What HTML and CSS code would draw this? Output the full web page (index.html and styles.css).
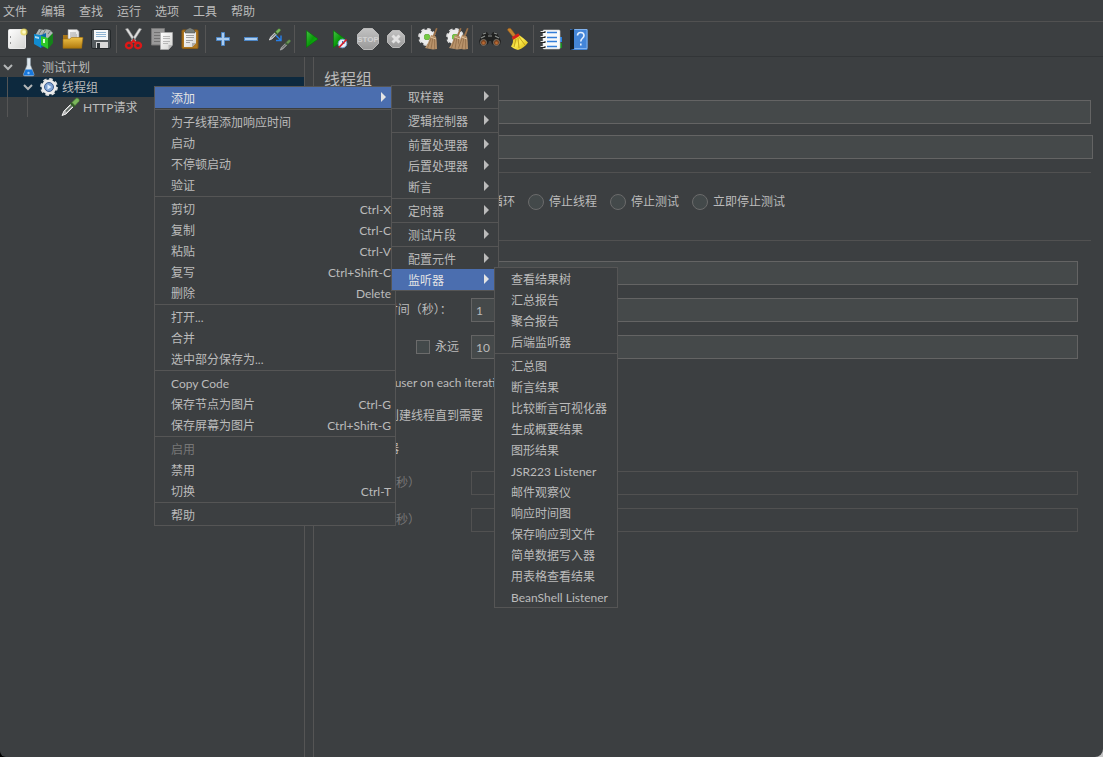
FILE: index.html
```html
<!DOCTYPE html>
<html lang="zh-CN">
<head>
<meta charset="utf-8">
<title>线程组</title>
<link rel="stylesheet" href="styles.css">
</head>
<body>
<svg class="defs" aria-hidden="true">
  <defs>
    <linearGradient id="paper" x1="0" y1="0" x2="1" y2="1"><stop offset="0" stop-color="#fff"/><stop offset="1" stop-color="#d4d4d2"/></linearGradient>
    <linearGradient id="gold" x1="0" y1="0" x2="0" y2="1"><stop offset="0" stop-color="#efc248"/><stop offset="1" stop-color="#b17a0e"/></linearGradient>
    <linearGradient id="play" x1="0" y1="0" x2="1" y2="1"><stop offset="0" stop-color="#44c244"/><stop offset=".5" stop-color="#0a9a0a"/><stop offset="1" stop-color="#0cc81c"/></linearGradient>
    <linearGradient id="grey" x1="0" y1="0" x2="0" y2="1"><stop offset="0" stop-color="#c2c2c2"/><stop offset="1" stop-color="#999"/></linearGradient>
    <linearGradient id="yellow" x1="0" y1="0" x2="1" y2="1"><stop offset="0" stop-color="#c9a80c"/><stop offset=".5" stop-color="#fbe94b"/><stop offset="1" stop-color="#d0ad08"/></linearGradient>
    <symbol id="gear" viewBox="0 0 18 18">
      <circle cx="9" cy="9" r="7.600" fill="none" stroke="#dcdcdc" stroke-width="2.600" stroke-dasharray="3.400 2.570"/>
      <circle cx="9" cy="9" r="5.200" fill="none" stroke="#ececec" stroke-width="4.600"/>
    </symbol>
    <symbol id="broom" viewBox="0 0 14 22">
      <path d="M12 0l1.500.6-3.300 9-2-.6z" fill="#9c7148"/>
      <path d="M7 7l5 1.600c1 4.400.7 8.400 1 12.400L9 21.500 1 20C4 16 5 12 7 7z" fill="#b8926a"/>
      <path d="M7.500 9L3.500 20M9 9L7 21M10.500 9.500l.2 11.500" stroke="#8a6642" stroke-width=".7" fill="none"/>
      <path d="M6.500 9l5.500 2" stroke="#e5c69f"/>
    </symbol>
    <symbol id="picker" viewBox="0 0 20 20">
      <path d="M2 18.500l2-4.500L11.500 6.500l2.500 2.500-8 8z" fill="#b9b9b9" stroke="#efefef"/>
      <path d="M6 14.500l6-6" stroke="#56615b" stroke-width="1.400"/>
      <path d="M10.500 6l4 4" stroke="#315f24" stroke-width="2"/>
      <path d="M12 5.500l4-4c1.500-1.200 4 .8 3 2.700L15 8.500z" fill="#7bb75b" stroke="#4f8f35" stroke-width=".6"/>
    </symbol>
  </defs>
</svg>

<nav class="menubar" aria-label="主菜单">
  <button>文件</button><button>编辑</button><button>查找</button><button>运行</button><button>选项</button><button>工具</button><button>帮助</button>
</nav>

<div class="toolbar" role="toolbar">
  <div class="tools">
    <button aria-label="新建"><svg viewBox="0 0 28 28"><rect x="5.500" y="4.500" width="17" height="19" rx="1" fill="url(#paper)" stroke="#e9e9e9"/><path d="M7.500 11v2M7.500 17v2" stroke="#999"/><circle cx="21" cy="7" r="3.600" fill="#e8d755" opacity=".75"/><circle cx="21" cy="7" r="1.800" fill="#fffbc4"/></svg></button>
    <button aria-label="模板"><svg viewBox="0 0 28 28"><path d="M5 9l3-5 5 1 1-1 5 1 3 3-2 7H5z" fill="#aeb5b5"/><path d="M8 9l3-5M12 9l3-5M17 9l3-4" stroke="#6e7777"/><path d="M3 9l7 1v13l-7-4z" fill="#118bd0"/><path d="M10 10l5-2v12l-5 3z" fill="#0a68aa"/><path d="M4 11l4 1v2l-4-1z" fill="#aadcf5"/><path d="M10 11l7 2v11l-7-4z" fill="#2ec829"/><path d="M17 13l5-5v10l-5 6z" fill="#15821a"/><rect x="12" y="14" width="2" height="4" fill="#d7ffd1"/></svg></button>
    <button aria-label="打开"><svg viewBox="0 0 28 28"><path d="M4 10h5l1 2h13v11H4z" fill="#a97516"/><path d="M9 4.500h9l2 2V17H9z" fill="url(#paper)" stroke="#999" stroke-width=".6"/><path d="M11 8h6M11 10h7M11 12h7" stroke="#888" stroke-width=".7"/><path d="M4 14h7l1.500-1.500H24l-1.500 10.800H4z" fill="url(#gold)" stroke="#a06d0d" stroke-width=".6"/></svg></button>
    <button aria-label="保存"><svg viewBox="0 0 28 28"><rect x="4.500" y="4.500" width="19" height="19" rx="1.500" fill="#555b5e" stroke="#25292b"/><rect x="7" y="5" width="14" height="10" fill="#f5f8fa"/><path d="M9 7.500h10M9 9.500h10M9 11.500h10" stroke="#8eb4d2"/><rect x="9" y="17" width="12" height="6" fill="#dadada"/><rect x="10" y="18" width="3" height="5" fill="#30373a"/></svg></button>
  </div>
  <div class="tools">
    <button aria-label="剪切"><svg viewBox="0 0 28 28"><path d="M5.500 4l2.500-.5L16 16l-1.500 2zM21.500 4L19 3.500 11 16l1.500 2z" fill="#dfdfdf" stroke="#9b9b9b" stroke-width=".6"/><ellipse cx="9" cy="20.500" rx="3" ry="2.800" fill="none" stroke="#dc1717" stroke-width="2.400"/><ellipse cx="18" cy="20.500" rx="3" ry="2.800" fill="none" stroke="#dc1717" stroke-width="2.400"/><path d="M10.500 18.500l3-3 3 3" stroke="#dc1717" stroke-width="2" fill="none"/></svg></button>
    <button aria-label="复制"><svg viewBox="0 0 28 28"><path d="M3.500 3.500h13V20h-13z" fill="#999" stroke="#777"/><path d="M6 7.500h8M6 10.500h7M6 13.500h6M6 16.500h6" stroke="#727272"/><path d="M12.500 7.500h12V20l-4 4.500h-8z" fill="url(#paper)" stroke="#aaa" stroke-width=".7"/><path d="M15 11.500h7M15 13.500h7M15 16.500h7M15 18.500h5" stroke="#aaa" stroke-width=".8"/><path d="M20.500 24.500v-4.500h4z" fill="#b9b9b9"/></svg></button>
    <button aria-label="粘贴"><svg viewBox="0 0 28 28"><rect x="6" y="5" width="16" height="18.500" rx="1" fill="#ae7720" stroke="#8d5d14"/><path d="M8 7h12v11l-4 4H8z" fill="url(#paper)"/><path d="M16 22v-4h4z" fill="#aaa"/><path d="M9 6l2-2h1l1-1h2l1 1h1l2 2v2H9z" fill="#777d78" stroke="#444" stroke-width=".5"/><path d="M10 10.500h8M10 12.500h8M10 15.500h7M10 17.500h4" stroke="#a1a1a1"/></svg></button>
  </div>
  <div class="tools">
    <button aria-label="展开全部"><svg viewBox="0 0 28 28"><path d="M12.500 7.500h3v5h5v3h-5v5h-3v-5h-5v-3h5z" fill="#aaccef" stroke="#4d86c5"/></svg></button>
    <button aria-label="折叠全部"><svg viewBox="0 0 28 28"><rect x="7.500" y="12.500" width="13" height="3" fill="#aaccef" stroke="#4d86c5"/></svg></button>
    <button aria-label="切换"><svg viewBox="0 0 28 28"><use href="#picker" x="3" y="3" width="13" height="13"/><use href="#picker" x="14" y="14" width="12" height="12" opacity=".7"/><path d="M11 10.500l4.500 4.500M16 10.500v5h-5" fill="none" stroke="#2880e8" stroke-width="1.400"/></svg></button>
  </div>
  <div class="tools">
    <button aria-label="启动"><svg viewBox="0 0 28 28"><path d="M8.500 5.500v17L20 14z" fill="url(#play)" stroke="#08720a" stroke-width=".7"/></svg></button>
    <button aria-label="不停顿启动"><svg viewBox="0 0 28 28"><path d="M7.500 5.500v17L19 14z" fill="url(#play)" stroke="#08720a" stroke-width=".7"/><circle cx="16.500" cy="18.500" r="4.300" fill="#e5eff9" stroke="#79a5d3"/><path d="M16.500 16v2.500h2" stroke="#3778b7" fill="none"/><path d="M13 22.500l7.500-8" stroke="#d3202b" stroke-width="1.800"/></svg></button>
    <button aria-label="停止"><svg viewBox="0 0 28 28"><path d="M9.500 3.500h9l6 6v9l-6 6h-9l-6-6v-9z" fill="url(#grey)" stroke="#b9b9b9"/><text x="14" y="17" class="stop-text" text-anchor="middle">STOP</text></svg></button>
    <button aria-label="关闭"><svg viewBox="0 0 28 28"><path d="M10.500 5.500h7l5 5v7l-5 5h-7l-5-5v-7z" fill="url(#grey)" stroke="#bababa"/><path d="M10.500 10.500l7 7M17.500 10.500l-7 7" stroke="#e2e2e2" stroke-width="3"/></svg></button>
  </div>
  <div class="tools">
    <button aria-label="清除"><svg viewBox="0 0 28 28"><use href="#gear" x="3" y="3" width="18" height="18"/><circle cx="12" cy="12" r="3" fill="#75c943"/><use href="#broom" x="9" y="3" width="14" height="22"/></svg></button>
    <button aria-label="清除全部"><svg viewBox="0 0 28 28"><use href="#gear" x="3" y="3" width="18" height="18"/><circle cx="12" cy="12" r="3" fill="#75c943"/><use href="#broom" x="5" y="3" width="14" height="22"/><use href="#broom" x="12" y="3" width="14" height="22"/></svg></button>
  </div>
  <div class="tools">
    <button aria-label="查找"><svg viewBox="0 0 28 28"><path d="M7 8l4-1 2 3h2l2-3 4 1 4 8-1 4-4 1-4-2-1-3h-2l-1 3-4 2-4-1-1-4z" fill="#202120"/><path d="M7 9l3-1M18 8l3 1M12 11h4M5 13l4-2M23 13l-4-2" stroke="#8c908d" stroke-width="1.200"/><circle cx="7.500" cy="17.500" r="3" fill="#7a421e" stroke="#77736b"/><circle cx="20.500" cy="17.500" r="3" fill="#7a421e" stroke="#77736b"/><circle cx="7.500" cy="18" r="1.400" fill="#b96a34"/><circle cx="20.500" cy="18" r="1.400" fill="#b96a34"/></svg></button>
    <button aria-label="重置查找"><svg viewBox="0 0 28 28"><path d="M3.500 5c0-2 3-2.500 4-.5l4.500 6-2.500 2z" fill="#c48330" stroke="#8c541c" stroke-width=".6"/><path d="M8.500 12.500L14 9c4 3 7 5.500 10 8.500-2.500 3.500-5.500 6-10 7.500-3.500-1-5-2-7-3.500 2-3 2.500-5.500 1.500-9z" fill="url(#yellow)"/><path d="M12 14l-2 8M14 13l1 10M15 12l6 8" stroke="#b79613" stroke-width=".8"/><path d="M8.500 13.500l6.500-4" stroke="#d5201c" stroke-width="3"/></svg></button>
  </div>
  <div class="tools">
    <button aria-label="函数助手"><svg viewBox="0 0 28 28"><path d="M22 12h3v5h-3z" fill="#2882e6"/><path d="M22 18h3v5h-3z" fill="#198c20"/><rect x="6" y="5" width="17" height="19" rx="1" fill="#f8fafb" stroke="#ccc" stroke-width=".6"/><path d="M10 7.500h10M10 12.500h10M10 16.500h10M10 21.500h10" stroke="#347ed8" stroke-width="1.300"/><path d="M3.500 7h5M3.500 12h5M3.500 17h5M3.500 22h5" stroke="#222" stroke-width="2"/><path d="M3.500 6.500h4M3.500 11.500h4M3.500 16.500h4M3.500 21.500h4" stroke="#ddd"/></svg></button>
    <button aria-label="帮助"><svg viewBox="0 0 28 28"><rect x="5" y="4" width="17.500" height="21" rx="1" fill="#4385d8"/><path d="M5 5l4-1v20l-4 1z" fill="#151d25"/><path d="M9.500 4.500h12.500v19H9.500" fill="none" stroke="#81b2ed"/><path d="M12.500 10.500c0-4 6.500-4 6.500 0 0 3-3.200 2.500-3.200 6M15.800 18.500v2" stroke="#e4f0ff" stroke-width="1.600" fill="none"/></svg></button>
  </div>
</div>

<main class="workspace">
  <aside class="tree-panel">
    <ul class="tree">
      <li class="node"><svg class="chevron" viewBox="0 0 10 10"><path d="M1 3l4 4 4-4"/></svg><svg class="node-icon" viewBox="0 0 20 20"><path d="M8 1h3.500v7l3.500 9c.4 1.200-.2 2-1.500 2H6c-1.300 0-1.900-.8-1.500-2L8 8z" fill="#dfe8ee" stroke="#8b99a2" stroke-width=".6"/><path d="M6.500 12.500h6.500l2 5c0 .8-.3 1-1.500 1H6c-1.200 0-1.500-.2-1.500-1z" fill="#1877db"/><circle cx="9.500" cy="16" r="1.200" fill="#8cc4ff"/></svg><span>测试计划</span></li>
      <li class="node level-1 selected"><svg class="chevron" viewBox="0 0 10 10"><path d="M1 3l4 4 4-4"/></svg><svg class="node-icon" viewBox="0 0 20 20"><use href="#gear" x="1" y="1" width="18" height="18"/><circle cx="10" cy="10" r="4.500" fill="#7ea2d2" stroke="#3d5c8e"/><path d="M8.500 7.500v5l4-2.500z" fill="#e3efff"/></svg><span>线程组</span></li>
      <li class="node level-2"><svg class="node-icon" viewBox="0 0 20 20"><use href="#picker" width="20" height="20"/></svg><span>HTTP请求</span></li>
    </ul>
  </aside>

  <form class="editor">
    <h1>线程组</h1>
    <div class="row wide"><label for="name">名称：</label><input id="name" type="text"></div>
    <div class="row wide comment"><label for="comment">注释：</label><input id="comment" type="text"></div>
    <h2>在取样器错误后要执行的动作</h2>
    <div class="radios">
      <label><input type="radio" name="on-error">继续</label>
      <label><input type="radio" name="on-error">启动下一进程循环</label>
      <label><input type="radio" name="on-error">停止线程</label>
      <label><input type="radio" name="on-error">停止测试</label>
      <label><input type="radio" name="on-error">立即停止测试</label>
    </div>
    <h2 class="second">线程属性</h2>
    <div class="props">
      <div class="row"><label for="threads">线程数：</label><input id="threads" type="text"></div>
      <div class="row"><label for="ramp">Ramp-Up时间（秒）：</label><input id="ramp" type="text" value="1"></div>
      <div class="row"><span class="loop"><label for="loops">循环次数</label><label class="check"><input type="checkbox">永远</label></span><input id="loops" type="text" value="10"></div>
      <label class="check"><input type="checkbox">Same user on each iteration</label>
      <label class="check"><input type="checkbox">延迟创建线程直到需要</label>
      <label class="check"><input type="checkbox">调度器</label>
      <div class="row"><label class="off" for="duration">持续时间（秒）</label><input id="duration" type="text" disabled></div>
      <div class="row"><label class="off" for="delay">启动延迟（秒）</label><input id="delay" type="text" disabled></div>
    </div>
  </form>
</main>

<div class="menu context-menu" role="menu">
  <button class="active arrow">添加</button>
  <hr>
  <button>为子线程添加响应时间</button>
  <button>启动</button>
  <button>不停顿启动</button>
  <button>验证</button>
  <hr>
  <button>剪切<kbd>Ctrl-X</kbd></button>
  <button>复制<kbd>Ctrl-C</kbd></button>
  <button>粘贴<kbd>Ctrl-V</kbd></button>
  <button>复写<kbd>Ctrl+Shift-C</kbd></button>
  <button>删除<kbd>Delete</kbd></button>
  <hr>
  <button>打开...</button>
  <button>合并</button>
  <button>选中部分保存为...</button>
  <hr>
  <button>Copy Code</button>
  <button>保存节点为图片<kbd>Ctrl-G</kbd></button>
  <button>保存屏幕为图片<kbd>Ctrl+Shift-G</kbd></button>
  <hr>
  <button disabled>启用</button>
  <button>禁用</button>
  <button>切换<kbd>Ctrl-T</kbd></button>
  <hr>
  <button>帮助</button>
</div>

<div class="menu add-menu" role="menu">
  <button class="arrow">取样器</button>
  <hr>
  <button class="arrow">逻辑控制器</button>
  <hr>
  <button class="arrow">前置处理器</button>
  <button class="arrow">后置处理器</button>
  <button class="arrow">断言</button>
  <hr>
  <button class="arrow">定时器</button>
  <hr>
  <button class="arrow">测试片段</button>
  <hr>
  <button class="arrow">配置元件</button>
  <button class="arrow active">监听器</button>
</div>

<div class="menu listener-menu" role="menu">
  <button>查看结果树</button>
  <button>汇总报告</button>
  <button>聚合报告</button>
  <button>后端监听器</button>
  <hr>
  <button>汇总图</button>
  <button>断言结果</button>
  <button>比较断言可视化器</button>
  <button>生成概要结果</button>
  <button>图形结果</button>
  <button>JSR223 Listener</button>
  <button>邮件观察仪</button>
  <button>响应时间图</button>
  <button>保存响应到文件</button>
  <button>简单数据写入器</button>
  <button>用表格查看结果</button>
  <button>BeanShell Listener</button>
</div>
</body>
</html>
```

FILE: styles.css
```css
* { box-sizing: border-box; }

html { background: linear-gradient(90deg, #000 50%, #c4c4c4 50%); }

body {
  margin: 0;
  min-height: 100vh;
  display: flex;
  flex-direction: column;
  background: #3c3f41;
  color: #bbb;
  border-radius: 0 0 8px 6px;
  font: 12px/18px Lato, "Noto Sans CJK SC", sans-serif;
}

button, input, kbd { font: inherit; color: inherit; }
button { border: 0; padding: 0; background: none; text-align: left; }
.defs { position: absolute; width: 0; height: 0; }

/* Menu bar and toolbar */
.menubar {
  display: flex;
  gap: 14px;
  height: 22px;
  padding: 2px 3px 0;
  border-bottom: 1px solid #515151;
}

.toolbar {
  display: flex;
  padding: 3px;
  border-bottom: 1px solid #323537;
}
.tools { display: flex; }
.tools + .tools {
  margin-left: 1px;
  padding-left: 3px;
  border-left: 1px solid #555;
}
.tools button, .tools svg { display: block; width: 28px; height: 28px; }
.stop-text { font: bold 8px "Liberation Sans", sans-serif; fill: #d3d3d3; }

/* Tree */
.workspace { flex: 1; display: flex; gap: 8px; }
.tree-panel { width: 305px; flex: none; border-right: 1px solid #555; }
.tree { list-style: none; margin: 0; padding: 0; }
.node {
  display: flex;
  align-items: center;
  height: 20px;
  padding-left: 3px;
  white-space: nowrap;
}
.node span { padding-top: 2px; }
.chevron {
  width: 10px;
  height: 10px;
  margin-right: 6px;
  fill: none;
  stroke: #b4b6b7;
  stroke-width: 2;
}
.node-icon { width: 20px; height: 20px; margin-right: 3px; }
.level-1 {
  padding-left: 23px;
  background: linear-gradient(#555, #555) 7px 0 / 1px 100% no-repeat;
}
.level-2 {
  padding-left: 60px;
  background:
    linear-gradient(#555, #555) 7px 0 / 1px 100% no-repeat,
    linear-gradient(#555, #555) 27px 0 / 1px 100% no-repeat;
}
.selected { background-color: #0d293e; }

/* Editor */
.editor {
  flex: 1;
  min-width: 0;
  padding: 10px 12px 10px 10px;
  border-left: 1px solid #555;
}
h1 { margin: 0 0 9px; font-size: 16px; line-height: 24px; font-weight: 400; }
h2 {
  display: flex;
  align-items: center;
  gap: 4px;
  margin: 0 0 12px;
  font-size: 12px;
  line-height: 18px;
  font-weight: 400;
}
h2::after { content: ""; flex: 1; height: 1px; background: #515151; }
h2.second { margin: 20px 0 12px; }

input[type="text"] {
  flex: 1;
  min-width: 0;
  height: 24px;
  margin: 0;
  padding: 0 4px;
  border: 1px solid #646464;
  border-radius: 0;
  background: #45494a;
}
input[type="text"]:disabled { background: transparent; border-color: #515151; }
.row { display: flex; align-items: center; white-space: nowrap; }
.wide { margin-bottom: 11px; }
.wide label { width: 40px; }
.comment { margin: 0 -2px 4px 0; }

.radios { display: flex; flex-wrap: wrap; gap: 13px; padding-left: 16px; }
.radios label, .check { display: flex; align-items: center; gap: 5px; }
input[type="radio"], input[type="checkbox"] {
  appearance: none;
  flex: none;
  margin: 0;
  border: 1px solid #6b6b6b;
  background: #43494a;
}
input[type="radio"] { width: 16px; height: 16px; border-radius: 50%; }
input[type="checkbox"] { width: 14px; height: 14px; }

.props {
  display: flex;
  flex-direction: column;
  gap: 13px;
  padding: 0 13px 0 12px;
}
.props .row > label, .loop { width: 135px; flex: none; }
.loop { display: flex; justify-content: space-between; padding-right: 12px; }
.props > .check { padding-left: 8px; margin-top: 1px; line-height: 19px; }
.props .off { color: #777; }

/* Popup menus */
.menu {
  position: absolute;
  border: 1px solid #555;
  background: #3c3f41;
}
.menu button {
  display: flex;
  align-items: center;
  justify-content: space-between;
  width: 100%;
  height: 21px;
  padding: 2px 4px 0 16px;
  white-space: nowrap;
}
.menu hr { height: 1px; margin: 1px 0; border: 0; background: #555; }
.menu button:disabled { color: #777; }
.menu .active { background: #4b6eaf; color: #e4e4e4; }
.arrow::after {
  content: "";
  border: 5px solid transparent;
  border-left-color: currentColor;
  border-right: 0;
  margin: 0 5px 3px 0;
}
.context-menu { left: 154px; top: 86px; width: 242px; }
.add-menu { left: 391px; top: 85px; width: 108px; }
.listener-menu { left: 494px; top: 267px; width: 124px; }
```
